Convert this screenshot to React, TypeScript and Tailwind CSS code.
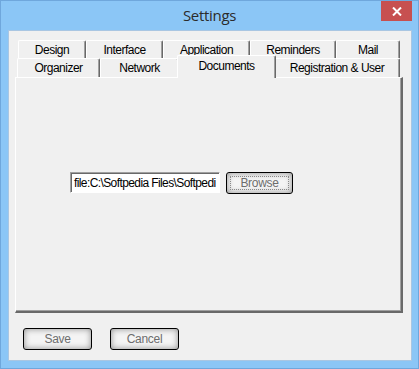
import React from 'react';

const row1 = [
  { label: 'Design', w: 'w-[68px]' },
  { label: 'Interface', w: 'w-[77px]' },
  { label: 'Application', w: 'w-[87px]' },
  { label: 'Reminders', w: 'w-[86px]' },
  { label: 'Mail', w: 'w-[64px]' },
];

const tabBase =
  'h-full flex items-center justify-center bg-[#f0f0f0] border-t border-l border-white border-r border-r-[#696969] shadow-[inset_-1px_0_0_#a0a0a0] rounded-t-[2px] text-[12px] tracking-[-0.5px] text-black';

const Button: React.FC<{ label: string; focused?: boolean; w: string }> = ({ label, focused, w }) => (
  <div
    className={`${w} h-[22px] rounded-[3px] border border-black bg-[#f4f4f4] shadow-[inset_0_0_6px_#8c8c8c] p-[3px] flex`}
  >
    <div
      className={`flex-1 flex items-center justify-center text-[12px] tracking-[-0.3px] text-[#6d6d6d] ${
        focused ? 'border border-dotted border-[#8a8a8a]' : ''
      }`}
    >
      {label}
    </div>
  </div>
);

export default function App() {
  return (
    <div className="w-[419px] h-[369px] bg-[#8bc6f6] border border-[#6fa7dc] flex flex-col relative font-['Liberation_Sans',Arial,sans-serif]">
      {/* Title bar */}
      <div className="h-[29px] flex items-center justify-center">
        <span className="text-[15px] text-[#2b2b2b] font-['Open_Sans',sans-serif] tracking-[-0.3px] pb-[1px]">
          Settings
        </span>
      </div>
      <div className="absolute right-[6px] top-0 w-[31px] h-[20px] bg-[#c75050] flex items-center justify-center">
        <svg width="10" height="9" viewBox="0 0 10 9">
          <path d="M1 0.5 L9 8.5 M9 0.5 L1 8.5" stroke="white" strokeWidth="2" />
        </svg>
      </div>

      {/* Client area */}
      <div className="flex-1 ml-[7px] mr-[6px] mb-[7px] bg-[#f0f0f0] border border-[#a9c6e2] flex flex-col pt-[9px] pl-[6px]">
        <div className="w-[388px] flex flex-col">
          <div className="h-[18px] flex pl-[3px]">
            {row1.map((t) => (
              <div key={t.label} className={`${t.w} ${tabBase}`}>
                {t.label}
              </div>
            ))}
          </div>
          <div className="h-[19px] flex items-start pl-[2px]">
            <div className={`w-[83px] ${tabBase}`}>Organizer</div>
            <div className={`w-[79px] ${tabBase}`}>Network</div>
            <div className="w-[99px] -mx-[2px] -mt-[3px] h-[23px] relative z-10 flex items-center justify-center bg-[#f0f0f0] border-t border-l border-white border-r border-r-[#696969] shadow-[inset_-1px_0_0_#a0a0a0] rounded-t-[2px] text-[12px] tracking-[-0.5px] text-black pb-[2px]">
              Documents
            </div>
            <div className={`w-[126px] ${tabBase}`}>Registration &amp; User</div>
          </div>
          {/* Panel */}
          <div className="h-[236px] bg-[#f0f0f0] border-t border-l border-white border-r-2 border-b-2 border-r-[#696969] border-b-[#696969] shadow-[inset_-1px_-1px_0_#a0a0a0] pt-[94px] pl-[54px] flex items-start gap-[6px]">
            <div className="w-[150px] h-[21px] bg-white border-t border-l border-[#a0a0a0] border-r border-b border-r-white border-b-white shadow-[inset_1px_1px_0_#696969] overflow-hidden whitespace-nowrap flex items-center pl-[3px] text-[12px] tracking-[-0.6px] text-black">
              file:C:\Softpedia Files\Softpedi
            </div>
            <Button label="Browse" focused w="w-[67px]" />
          </div>
        </div>

        <div className="flex gap-[18px] pl-[8px] mt-[15px]">
          <Button label="Save" w="w-[69px]" />
          <Button label="Cancel" w="w-[69px]" />
        </div>
      </div>
    </div>
  );
}
